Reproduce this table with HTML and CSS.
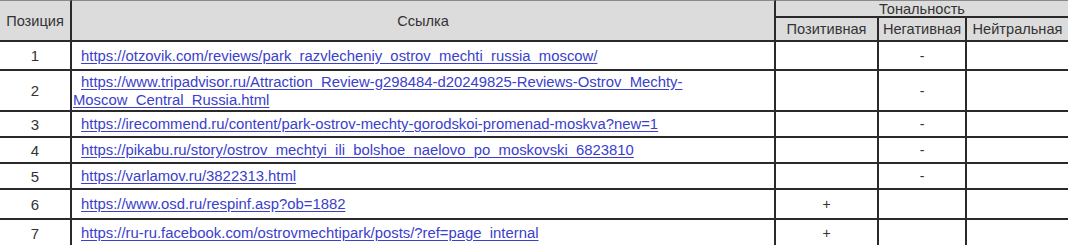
FILE: index.html
```html
<!DOCTYPE html>
<html lang="ru">
<head>
<meta charset="utf-8">
<title>Тональность ссылок</title>
<link rel="stylesheet" href="styles.css">
</head>
<body>
<div class="sheet">
  <div class="cell head top span-rows">Позиция</div>
  <div class="cell head top span-rows">Ссылка</div>
  <div class="cell head top span-cols last">Тональность</div>
  <div class="cell head">Позитивная</div>
  <div class="cell head">Негативная</div>
  <div class="cell head last">Нейтральная</div>

  <div class="cell num">1</div>
  <div class="cell link"><a href="#">https://otzovik.com/reviews/park_razvlecheniy_ostrov_mechti_russia_moscow/</a></div>
  <div class="cell mark"></div>
  <div class="cell mark">-</div>
  <div class="cell mark last"></div>

  <div class="cell num">2</div>
  <div class="cell link"><a href="#">https://www.tripadvisor.ru/Attraction_Review-g298484-d20249825-Reviews-Ostrov_Mechty-<br>Moscow_Central_Russia.html</a></div>
  <div class="cell mark"></div>
  <div class="cell mark">-</div>
  <div class="cell mark last"></div>

  <div class="cell num">3</div>
  <div class="cell link"><a href="#">https://irecommend.ru/content/park-ostrov-mechty-gorodskoi-promenad-moskva?new=1</a></div>
  <div class="cell mark"></div>
  <div class="cell mark">-</div>
  <div class="cell mark last"></div>

  <div class="cell num">4</div>
  <div class="cell link"><a href="#">https://pikabu.ru/story/ostrov_mechtyi_ili_bolshoe_naelovo_po_moskovski_6823810</a></div>
  <div class="cell mark"></div>
  <div class="cell mark">-</div>
  <div class="cell mark last"></div>

  <div class="cell num">5</div>
  <div class="cell link"><a href="#">https://varlamov.ru/3822313.html</a></div>
  <div class="cell mark"></div>
  <div class="cell mark">-</div>
  <div class="cell mark last"></div>

  <div class="cell num">6</div>
  <div class="cell link"><a href="#">https://www.osd.ru/respinf.asp?ob=1882</a></div>
  <div class="cell mark">+</div>
  <div class="cell mark"></div>
  <div class="cell mark last"></div>

  <div class="cell num">7</div>
  <div class="cell link"><a href="#">https://ru-ru.facebook.com/ostrovmechtipark/posts/?ref=page_internal</a></div>
  <div class="cell mark">+</div>
  <div class="cell mark"></div>
  <div class="cell mark last"></div>
</div>
</body>
</html>
```

FILE: styles.css
```css
html, body {
  margin: 0;
  padding: 0;
  background: #ffffff;
  overflow: hidden;
}

.sheet {
  display: grid;
  width: 1068px;
  grid-template-columns: 72px 704px 103px 88px 101px;
  grid-template-rows: 18px 24px 29px 41px 26px 26px 26px 30px 28px;
  font-family: "Liberation Sans", Arial, sans-serif;
  font-size: 15px;
  color: #2a2a2a;
}

.cell {
  box-sizing: border-box;
  border-right: 2px solid #2a2a2a;
  border-bottom: 2px solid #2a2a2a;
  display: flex;
  align-items: center;
  justify-content: center;
  min-width: 0;
  white-space: nowrap;
}

.cell.last {
  border-right: none;
}

.head {
  background: #dcdcdc;
  color: #333333;
  font-size: 14.6px;
}

.top {
  border-top: 1px solid #8a8a8a;
}

.span-rows {
  grid-row: span 2;
}

.span-cols {
  grid-column: span 3;
}

.num {
  color: #333333;
}

.link {
  justify-content: flex-start;
  padding-left: 1px;
  font-size: 14.85px;
  line-height: 18px;
  white-space: normal;
}

.link a {
  display: block;
  text-indent: 8px;
  color: #3a40cc;
  text-decoration: underline;
  text-underline-offset: 2px;
  white-space: nowrap;
}

.mark {
  color: #333333;
  font-size: 14px;
}
```
